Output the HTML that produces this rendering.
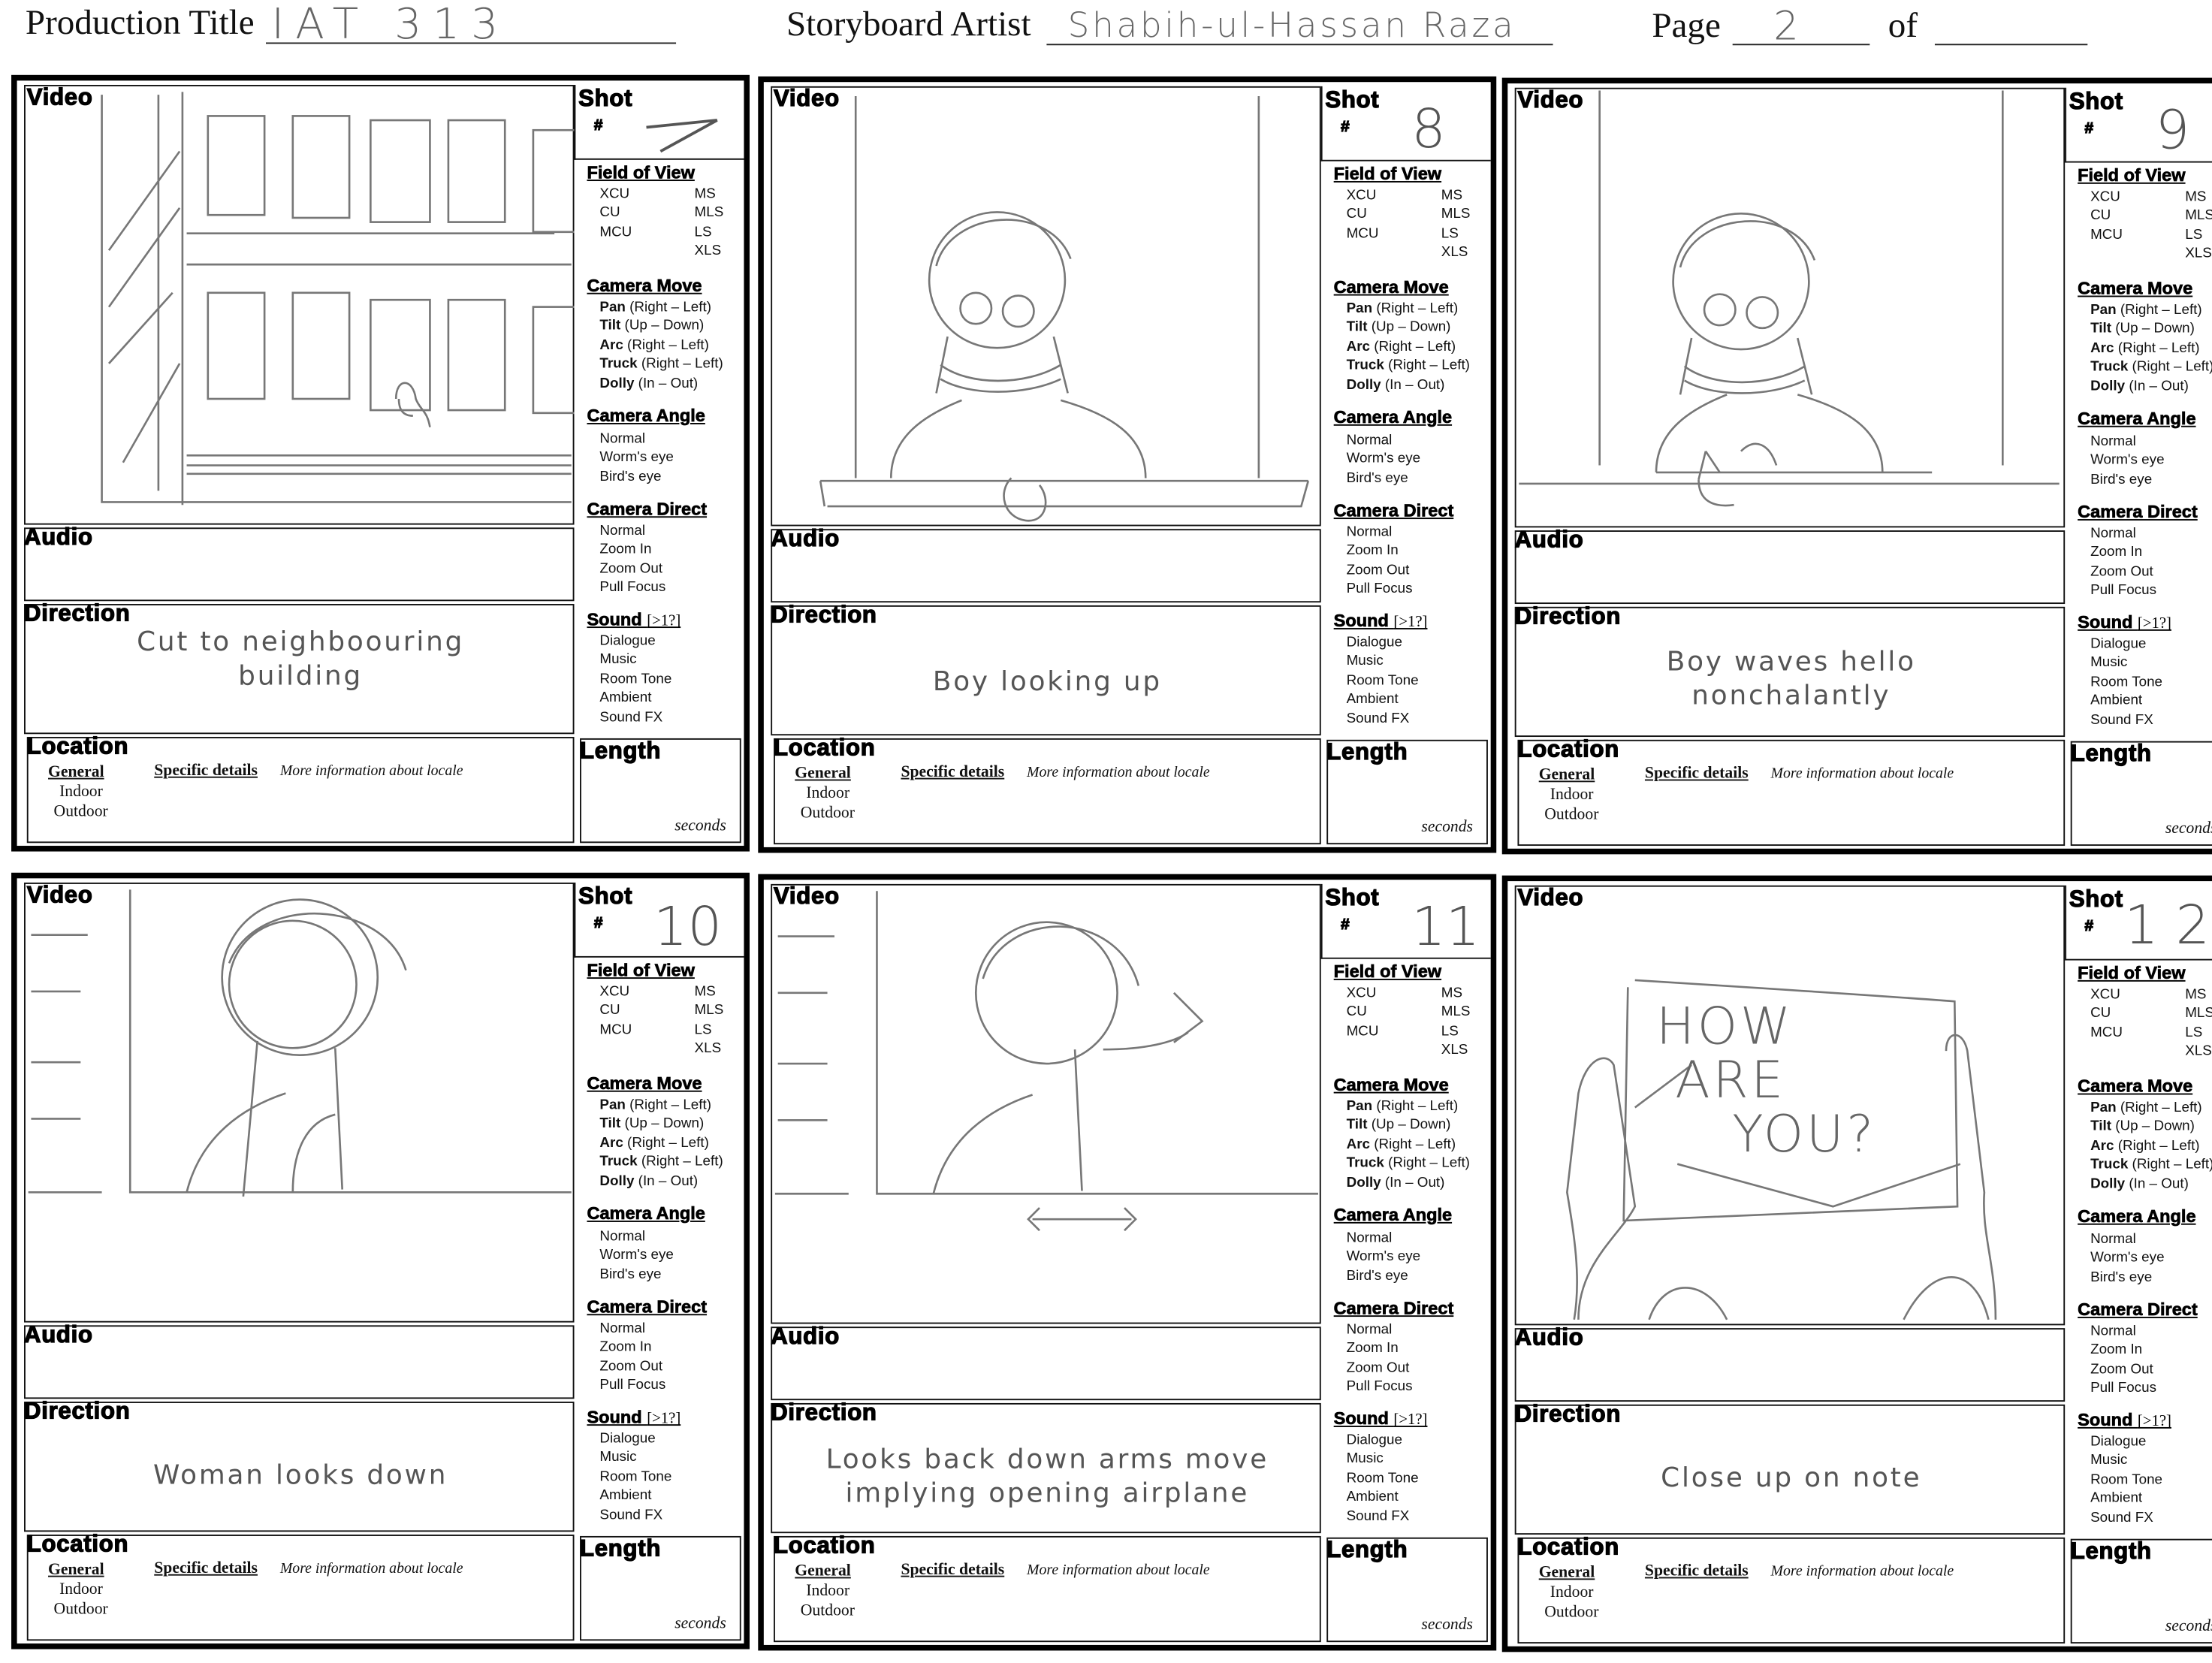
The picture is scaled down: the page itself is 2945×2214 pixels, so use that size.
<!DOCTYPE html>
<html><head><meta charset="utf-8">
<style>
html,body{margin:0;padding:0;background:#fff;}
body{width:2945px;height:2214px;overflow:hidden;position:relative;}
#w{position:absolute;left:0;top:0;width:1564px;height:1176px;transform:scale(1.883);transform-origin:0 0;}
.a{position:absolute;}
.hd{font-family:"Liberation Serif",serif;font-size:25px;color:#111;}
.ul{position:absolute;height:0;border-top:1.3px solid #222;}
.hw{font-family:"DejaVu Sans",sans-serif;color:#666;font-weight:300;}
.p{position:absolute;width:522px;height:549px;border:4px solid #000;box-sizing:border-box;background:#fff;overflow:hidden;}
.bx{position:absolute;border:1.4px solid #111;box-sizing:border-box;}
.lb{position:absolute;font-family:"Liberation Sans",sans-serif;font-weight:bold;font-size:16.5px;color:#000;letter-spacing:0.4px;line-height:1;-webkit-text-stroke:0.7px #000;}
.sh{position:absolute;font-family:"Liberation Sans",sans-serif;font-weight:bold;font-size:12.5px;text-decoration:underline;color:#000;line-height:1;white-space:nowrap;-webkit-text-stroke:0.4px #000;}
.it{position:absolute;font-family:"Liberation Sans Narrow","Liberation Sans",sans-serif;font-size:10px;color:#111;line-height:13.4px;white-space:nowrap;}
.it b{font-weight:bold;}
.sf{position:absolute;font-family:"Liberation Serif",serif;font-size:11.5px;color:#111;line-height:14.5px;white-space:nowrap;}
.num{position:absolute;font-family:"DejaVu Sans",sans-serif;font-weight:200;color:#555;font-size:38px;line-height:1;}
.dir{position:absolute;left:7px;width:387px;text-align:center;font-family:"DejaVu Sans",sans-serif;color:#555;font-size:19px;letter-spacing:1.5px;line-height:24px;}
svg.sk{position:absolute;left:0;top:0;}
svg.sk *{fill:none;stroke:#777;stroke-width:1.4;}
</style></head><body><div id="w">

<div class="a hd" style="left:18px;top:3px;">Production Title</div>
<div class="ul" style="left:188px;top:30px;width:290px;"></div>
<div class="a hw" style="left:192px;top:0px;font-size:30px;letter-spacing:8px;">IAT 313</div>
<div class="a hd" style="left:556px;top:4px;">Storyboard Artist</div>
<div class="ul" style="left:740px;top:31px;width:358px;"></div>
<div class="a hw" style="left:755px;top:4px;font-size:24px;letter-spacing:2px;">Shabih-ul-Hassan Raza</div>
<div class="a hd" style="left:1168px;top:5px;">Page</div>
<div class="ul" style="left:1225px;top:31px;width:97px;"></div>
<div class="a hw" style="left:1254px;top:2px;font-size:28px;">2</div>
<div class="a hd" style="left:1335px;top:5px;">of</div>
<div class="ul" style="left:1368px;top:31px;width:108px;"></div>

<!-- P1 -->
<div class="p" style="left:8px;top:53px;">
<div class="bx" style="left:5px;top:3px;width:389px;height:311px;"></div>
<svg class="sk" width="394" height="314"><path d="M117 8V300M60 10V298H392M100 10V290M120 108H380M120 130H392M120 265H392M120 272H392M120 278H392"/><rect x="135" y="25" width="40" height="70"/><rect x="195" y="25" width="40" height="72"/><rect x="250" y="28" width="42" height="72"/><rect x="305" y="28" width="40" height="72"/><rect x="365" y="35" width="30" height="72"/><rect x="135" y="150" width="40" height="75"/><rect x="195" y="150" width="40" height="75"/><rect x="250" y="155" width="42" height="78"/><rect x="305" y="155" width="40" height="78"/><rect x="365" y="160" width="30" height="75"/><path d="M65 120L115 50M65 160L115 90M65 200L110 150M75 270L115 200M268 225c0-15 12-15 14 0 3 8 8 8 10 20M270 225c0 10 5 12 10 12"/></svg>
<div class="lb" style="left:7px;top:4px;">Video</div>
<div class="bx" style="left:394px;top:3px;width:124px;height:53px;border-top:none;border-right:none;"></div>
<div class="lb" style="left:397px;top:5px;">Shot</div>
<div class="lb" style="left:408px;top:27px;font-size:11px;">#</div>
<svg class="sk" width="518" height="60"><path d="M445 33L495 28L455 50" style="stroke:#555;stroke-width:2"/></svg>
<div class="sh" style="left:403px;top:59px;">Field of View</div>
<div class="it" style="left:412px;top:74px;">XCU<br>CU<br>MCU</div>
<div class="it" style="left:479px;top:74px;">MS<br>MLS<br>LS<br>XLS</div>
<div class="sh" style="left:403px;top:139px;">Camera Move</div>
<div class="it" style="left:412px;top:154px;"><b>Pan</b> (Right – Left)<br><b>Tilt</b> (Up – Down)<br><b>Arc</b> (Right – Left)<br><b>Truck</b> (Right – Left)<br><b>Dolly</b> (In – Out)</div>
<div class="sh" style="left:403px;top:231px;">Camera Angle</div>
<div class="it" style="left:412px;top:247px;">Normal<br>Worm's eye<br>Bird's eye</div>
<div class="sh" style="left:403px;top:297px;">Camera Direct</div>
<div class="it" style="left:412px;top:312px;">Normal<br>Zoom In<br>Zoom Out<br>Pull Focus</div>
<div class="sh" style="left:403px;top:375px;">Sound <span style="font-family:'Liberation Serif',serif;font-weight:normal;text-decoration:none;font-size:11px;-webkit-text-stroke:0">[&gt;1?]</span></div>
<div class="it" style="left:412px;top:390px;">Dialogue<br>Music<br>Room Tone<br>Ambient<br>Sound FX</div>
<div class="bx" style="left:5px;top:316px;width:389px;height:52px;"></div>
<div class="lb" style="left:5px;top:315px;">Audio</div>
<div class="bx" style="left:5px;top:370px;width:389px;height:92px;"></div>
<div class="lb" style="left:5px;top:369px;">Direction</div>
<div class="dir" style="top:385px;">Cut to neighboouring<br>building</div>
<div class="bx" style="left:7px;top:464px;width:387px;height:75px;"></div>
<div class="lb" style="left:7px;top:463px;">Location</div>
<div class="sf" style="left:22px;top:482px;font-weight:bold;text-decoration:underline;">General</div>
<div class="sf" style="left:30px;top:496px;">Indoor</div>
<div class="sf" style="left:26px;top:510px;">Outdoor</div>
<div class="sf" style="left:97px;top:481px;font-weight:bold;text-decoration:underline;">Specific details</div>
<div class="sf" style="left:186px;top:482px;font-style:italic;font-size:10.5px;">More information about locale</div>
<div class="bx" style="left:398px;top:465px;width:114px;height:74px;"></div>
<div class="lb" style="left:398px;top:466px;">Length</div>
<div class="sf" style="left:465px;top:520px;font-style:italic;">seconds</div>
</div>

<!-- P2 -->
<div class="p" style="left:536px;top:54px;">
<div class="bx" style="left:5px;top:3px;width:389px;height:311px;"></div>
<svg class="sk" width="394" height="314"><path d="M65 10V280M350 10V280M40 282H385M45 300H380l5-18M40 282l3 18"/><circle cx="165" cy="140" r="48"/><path d="M122 130c10-40 80-45 95-5M130 180l-8 40M205 180l10 40"/><circle cx="150" cy="160" r="11"/><circle cx="180" cy="162" r="11"/><path d="M125 200c20 15 60 15 85 0M125 210c20 12 60 12 85 0M90 280c0-30 25-45 50-55M270 280c0-30-25-45-60-55M175 280c-10 10 -5 28 10 30s18-15 10-25"/></svg>
<div class="lb" style="left:7px;top:4px;">Video</div>
<div class="bx" style="left:394px;top:3px;width:124px;height:53px;border-top:none;border-right:none;"></div>
<div class="lb" style="left:397px;top:5px;">Shot</div>
<div class="lb" style="left:408px;top:27px;font-size:11px;">#</div>
<div class="num" style="left:458px;top:14px;">8</div>
<div class="sh" style="left:403px;top:59px;">Field of View</div>
<div class="it" style="left:412px;top:74px;">XCU<br>CU<br>MCU</div>
<div class="it" style="left:479px;top:74px;">MS<br>MLS<br>LS<br>XLS</div>
<div class="sh" style="left:403px;top:139px;">Camera Move</div>
<div class="it" style="left:412px;top:154px;"><b>Pan</b> (Right – Left)<br><b>Tilt</b> (Up – Down)<br><b>Arc</b> (Right – Left)<br><b>Truck</b> (Right – Left)<br><b>Dolly</b> (In – Out)</div>
<div class="sh" style="left:403px;top:231px;">Camera Angle</div>
<div class="it" style="left:412px;top:247px;">Normal<br>Worm's eye<br>Bird's eye</div>
<div class="sh" style="left:403px;top:297px;">Camera Direct</div>
<div class="it" style="left:412px;top:312px;">Normal<br>Zoom In<br>Zoom Out<br>Pull Focus</div>
<div class="sh" style="left:403px;top:375px;">Sound <span style="font-family:'Liberation Serif',serif;font-weight:normal;text-decoration:none;font-size:11px;-webkit-text-stroke:0">[&gt;1?]</span></div>
<div class="it" style="left:412px;top:390px;">Dialogue<br>Music<br>Room Tone<br>Ambient<br>Sound FX</div>
<div class="bx" style="left:5px;top:316px;width:389px;height:52px;"></div>
<div class="lb" style="left:5px;top:315px;">Audio</div>
<div class="bx" style="left:5px;top:370px;width:389px;height:92px;"></div>
<div class="lb" style="left:5px;top:369px;">Direction</div>
<div class="dir" style="top:412px;">Boy looking up</div>
<div class="bx" style="left:7px;top:464px;width:387px;height:75px;"></div>
<div class="lb" style="left:7px;top:463px;">Location</div>
<div class="sf" style="left:22px;top:482px;font-weight:bold;text-decoration:underline;">General</div>
<div class="sf" style="left:30px;top:496px;">Indoor</div>
<div class="sf" style="left:26px;top:510px;">Outdoor</div>
<div class="sf" style="left:97px;top:481px;font-weight:bold;text-decoration:underline;">Specific details</div>
<div class="sf" style="left:186px;top:482px;font-style:italic;font-size:10.5px;">More information about locale</div>
<div class="bx" style="left:398px;top:465px;width:114px;height:74px;"></div>
<div class="lb" style="left:398px;top:466px;">Length</div>
<div class="sf" style="left:465px;top:520px;font-style:italic;">seconds</div>
</div>

<!-- P3 -->
<div class="p" style="left:1062px;top:55px;width:540px;">
<div class="bx" style="left:5px;top:3px;width:389px;height:311px;"></div>
<svg class="sk" width="394" height="314"><path d="M65 5V270M350 5V270M8 283H390M105 275H300"/><circle cx="165" cy="140" r="48"/><path d="M122 130c10-40 80-45 95-5M130 180l-8 40M205 180l10 40"/><circle cx="150" cy="160" r="11"/><circle cx="180" cy="162" r="11"/><path d="M125 200c20 15 60 15 85 0M125 210c20 12 60 12 85 0M105 275c0-30 25-45 50-55M265 275c0-30-25-45-60-55M140 260l-5 20M135 280c0 15 10 20 25 18M140 260l10 15M165 260c10-10 20-5 25 10"/></svg>
<div class="lb" style="left:7px;top:4px;">Video</div>
<div class="bx" style="left:394px;top:3px;width:140px;height:53px;border-top:none;border-right:none;"></div>
<div class="lb" style="left:397px;top:5px;">Shot</div>
<div class="lb" style="left:408px;top:27px;font-size:11px;">#</div>
<div class="num" style="left:458px;top:14px;">9</div>
<div class="sh" style="left:403px;top:59px;">Field of View</div>
<div class="it" style="left:412px;top:74px;">XCU<br>CU<br>MCU</div>
<div class="it" style="left:479px;top:74px;">MS<br>MLS<br>LS<br>XLS</div>
<div class="sh" style="left:403px;top:139px;">Camera Move</div>
<div class="it" style="left:412px;top:154px;"><b>Pan</b> (Right – Left)<br><b>Tilt</b> (Up – Down)<br><b>Arc</b> (Right – Left)<br><b>Truck</b> (Right – Left)<br><b>Dolly</b> (In – Out)</div>
<div class="sh" style="left:403px;top:231px;">Camera Angle</div>
<div class="it" style="left:412px;top:247px;">Normal<br>Worm's eye<br>Bird's eye</div>
<div class="sh" style="left:403px;top:297px;">Camera Direct</div>
<div class="it" style="left:412px;top:312px;">Normal<br>Zoom In<br>Zoom Out<br>Pull Focus</div>
<div class="sh" style="left:403px;top:375px;">Sound <span style="font-family:'Liberation Serif',serif;font-weight:normal;text-decoration:none;font-size:11px;-webkit-text-stroke:0">[&gt;1?]</span></div>
<div class="it" style="left:412px;top:390px;">Dialogue<br>Music<br>Room Tone<br>Ambient<br>Sound FX</div>
<div class="bx" style="left:5px;top:316px;width:389px;height:52px;"></div>
<div class="lb" style="left:5px;top:315px;">Audio</div>
<div class="bx" style="left:5px;top:370px;width:389px;height:92px;"></div>
<div class="lb" style="left:5px;top:369px;">Direction</div>
<div class="dir" style="top:397px;">Boy waves hello<br>nonchalantly</div>
<div class="bx" style="left:7px;top:464px;width:387px;height:75px;"></div>
<div class="lb" style="left:7px;top:463px;">Location</div>
<div class="sf" style="left:22px;top:482px;font-weight:bold;text-decoration:underline;">General</div>
<div class="sf" style="left:30px;top:496px;">Indoor</div>
<div class="sf" style="left:26px;top:510px;">Outdoor</div>
<div class="sf" style="left:97px;top:481px;font-weight:bold;text-decoration:underline;">Specific details</div>
<div class="sf" style="left:186px;top:482px;font-style:italic;font-size:10.5px;">More information about locale</div>
<div class="bx" style="left:398px;top:465px;width:114px;height:74px;"></div>
<div class="lb" style="left:398px;top:466px;">Length</div>
<div class="sf" style="left:465px;top:520px;font-style:italic;">seconds</div>
</div>

<!-- P4 -->
<div class="p" style="left:8px;top:617px;">
<div class="bx" style="left:5px;top:3px;width:389px;height:311px;"></div>
<svg class="sk" width="394" height="314"><path d="M80 8V222H392M8 222H60M10 40H50M10 80H45M10 130H45M10 170H45"/><circle cx="200" cy="70" r="55"/><circle cx="195" cy="75" r="45"/><path d="M150 60c20-50 110-45 125 5M170 115l-10 110M225 120l5 100M120 222c10-40 40-60 70-70M195 222c0-30 10-50 30-55"/></svg>
<div class="lb" style="left:7px;top:4px;">Video</div>
<div class="bx" style="left:394px;top:3px;width:124px;height:53px;border-top:none;border-right:none;"></div>
<div class="lb" style="left:397px;top:5px;">Shot</div>
<div class="lb" style="left:408px;top:27px;font-size:11px;">#</div>
<div class="num" style="left:450px;top:15px;">10</div>
<div class="sh" style="left:403px;top:59px;">Field of View</div>
<div class="it" style="left:412px;top:74px;">XCU<br>CU<br>MCU</div>
<div class="it" style="left:479px;top:74px;">MS<br>MLS<br>LS<br>XLS</div>
<div class="sh" style="left:403px;top:139px;">Camera Move</div>
<div class="it" style="left:412px;top:154px;"><b>Pan</b> (Right – Left)<br><b>Tilt</b> (Up – Down)<br><b>Arc</b> (Right – Left)<br><b>Truck</b> (Right – Left)<br><b>Dolly</b> (In – Out)</div>
<div class="sh" style="left:403px;top:231px;">Camera Angle</div>
<div class="it" style="left:412px;top:247px;">Normal<br>Worm's eye<br>Bird's eye</div>
<div class="sh" style="left:403px;top:297px;">Camera Direct</div>
<div class="it" style="left:412px;top:312px;">Normal<br>Zoom In<br>Zoom Out<br>Pull Focus</div>
<div class="sh" style="left:403px;top:375px;">Sound <span style="font-family:'Liberation Serif',serif;font-weight:normal;text-decoration:none;font-size:11px;-webkit-text-stroke:0">[&gt;1?]</span></div>
<div class="it" style="left:412px;top:390px;">Dialogue<br>Music<br>Room Tone<br>Ambient<br>Sound FX</div>
<div class="bx" style="left:5px;top:316px;width:389px;height:52px;"></div>
<div class="lb" style="left:5px;top:315px;">Audio</div>
<div class="bx" style="left:5px;top:370px;width:389px;height:92px;"></div>
<div class="lb" style="left:5px;top:369px;">Direction</div>
<div class="dir" style="top:410px;">Woman looks down</div>
<div class="bx" style="left:7px;top:464px;width:387px;height:75px;"></div>
<div class="lb" style="left:7px;top:463px;">Location</div>
<div class="sf" style="left:22px;top:482px;font-weight:bold;text-decoration:underline;">General</div>
<div class="sf" style="left:30px;top:496px;">Indoor</div>
<div class="sf" style="left:26px;top:510px;">Outdoor</div>
<div class="sf" style="left:97px;top:481px;font-weight:bold;text-decoration:underline;">Specific details</div>
<div class="sf" style="left:186px;top:482px;font-style:italic;font-size:10.5px;">More information about locale</div>
<div class="bx" style="left:398px;top:465px;width:114px;height:74px;"></div>
<div class="lb" style="left:398px;top:466px;">Length</div>
<div class="sf" style="left:465px;top:520px;font-style:italic;">seconds</div>
</div>

<!-- P5 -->
<div class="p" style="left:536px;top:618px;">
<div class="bx" style="left:5px;top:3px;width:389px;height:311px;"></div>
<svg class="sk" width="394" height="314"><path d="M80 8V222H392M8 222H60M10 40H50M10 80H45M10 130H45M10 170H45"/><circle cx="200" cy="80" r="50"/><path d="M155 70c15-50 95-50 110 5M240 120c30 0 50-5 60-12M290 80l20 20l-20 15M220 120l5 100M120 222c10-40 40-60 70-70M190 240H260M195 232l-8 8l8 8M255 232l8 8l-8 8"/></svg>
<div class="lb" style="left:7px;top:4px;">Video</div>
<div class="bx" style="left:394px;top:3px;width:124px;height:53px;border-top:none;border-right:none;"></div>
<div class="lb" style="left:397px;top:5px;">Shot</div>
<div class="lb" style="left:408px;top:27px;font-size:11px;">#</div>
<div class="num" style="left:458px;top:14px;">11</div>
<div class="sh" style="left:403px;top:59px;">Field of View</div>
<div class="it" style="left:412px;top:74px;">XCU<br>CU<br>MCU</div>
<div class="it" style="left:479px;top:74px;">MS<br>MLS<br>LS<br>XLS</div>
<div class="sh" style="left:403px;top:139px;">Camera Move</div>
<div class="it" style="left:412px;top:154px;"><b>Pan</b> (Right – Left)<br><b>Tilt</b> (Up – Down)<br><b>Arc</b> (Right – Left)<br><b>Truck</b> (Right – Left)<br><b>Dolly</b> (In – Out)</div>
<div class="sh" style="left:403px;top:231px;">Camera Angle</div>
<div class="it" style="left:412px;top:247px;">Normal<br>Worm's eye<br>Bird's eye</div>
<div class="sh" style="left:403px;top:297px;">Camera Direct</div>
<div class="it" style="left:412px;top:312px;">Normal<br>Zoom In<br>Zoom Out<br>Pull Focus</div>
<div class="sh" style="left:403px;top:375px;">Sound <span style="font-family:'Liberation Serif',serif;font-weight:normal;text-decoration:none;font-size:11px;-webkit-text-stroke:0">[&gt;1?]</span></div>
<div class="it" style="left:412px;top:390px;">Dialogue<br>Music<br>Room Tone<br>Ambient<br>Sound FX</div>
<div class="bx" style="left:5px;top:316px;width:389px;height:52px;"></div>
<div class="lb" style="left:5px;top:315px;">Audio</div>
<div class="bx" style="left:5px;top:370px;width:389px;height:92px;"></div>
<div class="lb" style="left:5px;top:369px;">Direction</div>
<div class="dir" style="top:398px;">Looks back down arms move<br>implying opening airplane</div>
<div class="bx" style="left:7px;top:464px;width:387px;height:75px;"></div>
<div class="lb" style="left:7px;top:463px;">Location</div>
<div class="sf" style="left:22px;top:482px;font-weight:bold;text-decoration:underline;">General</div>
<div class="sf" style="left:30px;top:496px;">Indoor</div>
<div class="sf" style="left:26px;top:510px;">Outdoor</div>
<div class="sf" style="left:97px;top:481px;font-weight:bold;text-decoration:underline;">Specific details</div>
<div class="sf" style="left:186px;top:482px;font-style:italic;font-size:10.5px;">More information about locale</div>
<div class="bx" style="left:398px;top:465px;width:114px;height:74px;"></div>
<div class="lb" style="left:398px;top:466px;">Length</div>
<div class="sf" style="left:465px;top:520px;font-style:italic;">seconds</div>
</div>

<!-- P6 -->
<div class="p" style="left:1062px;top:619px;width:540px;">
<div class="bx" style="left:5px;top:3px;width:389px;height:311px;"></div>
<svg class="sk" width="394" height="314"><path d="M85 75L82 240L318 230L316 85Q250 80 90 70M50 310c0-40 30-60 40-80L75 130c-5-10-20-5-25 20L42 220c5 30 10 60 5 90M345 310c0-40-10-60-8-90L325 120c-3-15-15-15-15 0M340 310c-10-40-40-40-60 0M100 310c10-30 40-30 55 0M90 160L130 130M120 200L230 230L320 200"/></svg>
<div class="a" style="left:105px;top:85px;font-family:'DejaVu Sans',sans-serif;font-weight:200;color:#666;font-size:36px;line-height:38px;letter-spacing:2px;">HOW<br>&nbsp;ARE<br>&nbsp;&nbsp;&nbsp;&nbsp;YOU?</div>
<div class="lb" style="left:7px;top:4px;">Video</div>
<div class="bx" style="left:394px;top:3px;width:140px;height:53px;border-top:none;border-right:none;"></div>
<div class="lb" style="left:397px;top:5px;">Shot</div>
<div class="lb" style="left:408px;top:27px;font-size:11px;">#</div>
<div class="num" style="left:436px;top:12px;">1 2</div>
<div class="sh" style="left:403px;top:59px;">Field of View</div>
<div class="it" style="left:412px;top:74px;">XCU<br>CU<br>MCU</div>
<div class="it" style="left:479px;top:74px;">MS<br>MLS<br>LS<br>XLS</div>
<div class="sh" style="left:403px;top:139px;">Camera Move</div>
<div class="it" style="left:412px;top:154px;"><b>Pan</b> (Right – Left)<br><b>Tilt</b> (Up – Down)<br><b>Arc</b> (Right – Left)<br><b>Truck</b> (Right – Left)<br><b>Dolly</b> (In – Out)</div>
<div class="sh" style="left:403px;top:231px;">Camera Angle</div>
<div class="it" style="left:412px;top:247px;">Normal<br>Worm's eye<br>Bird's eye</div>
<div class="sh" style="left:403px;top:297px;">Camera Direct</div>
<div class="it" style="left:412px;top:312px;">Normal<br>Zoom In<br>Zoom Out<br>Pull Focus</div>
<div class="sh" style="left:403px;top:375px;">Sound <span style="font-family:'Liberation Serif',serif;font-weight:normal;text-decoration:none;font-size:11px;-webkit-text-stroke:0">[&gt;1?]</span></div>
<div class="it" style="left:412px;top:390px;">Dialogue<br>Music<br>Room Tone<br>Ambient<br>Sound FX</div>
<div class="bx" style="left:5px;top:316px;width:389px;height:52px;"></div>
<div class="lb" style="left:5px;top:315px;">Audio</div>
<div class="bx" style="left:5px;top:370px;width:389px;height:92px;"></div>
<div class="lb" style="left:5px;top:369px;">Direction</div>
<div class="dir" style="top:410px;">Close up on note</div>
<div class="bx" style="left:7px;top:464px;width:387px;height:75px;"></div>
<div class="lb" style="left:7px;top:463px;">Location</div>
<div class="sf" style="left:22px;top:482px;font-weight:bold;text-decoration:underline;">General</div>
<div class="sf" style="left:30px;top:496px;">Indoor</div>
<div class="sf" style="left:26px;top:510px;">Outdoor</div>
<div class="sf" style="left:97px;top:481px;font-weight:bold;text-decoration:underline;">Specific details</div>
<div class="sf" style="left:186px;top:482px;font-style:italic;font-size:10.5px;">More information about locale</div>
<div class="bx" style="left:398px;top:465px;width:114px;height:74px;"></div>
<div class="lb" style="left:398px;top:466px;">Length</div>
<div class="sf" style="left:465px;top:520px;font-style:italic;">seconds</div>
</div>

</div></body></html>
